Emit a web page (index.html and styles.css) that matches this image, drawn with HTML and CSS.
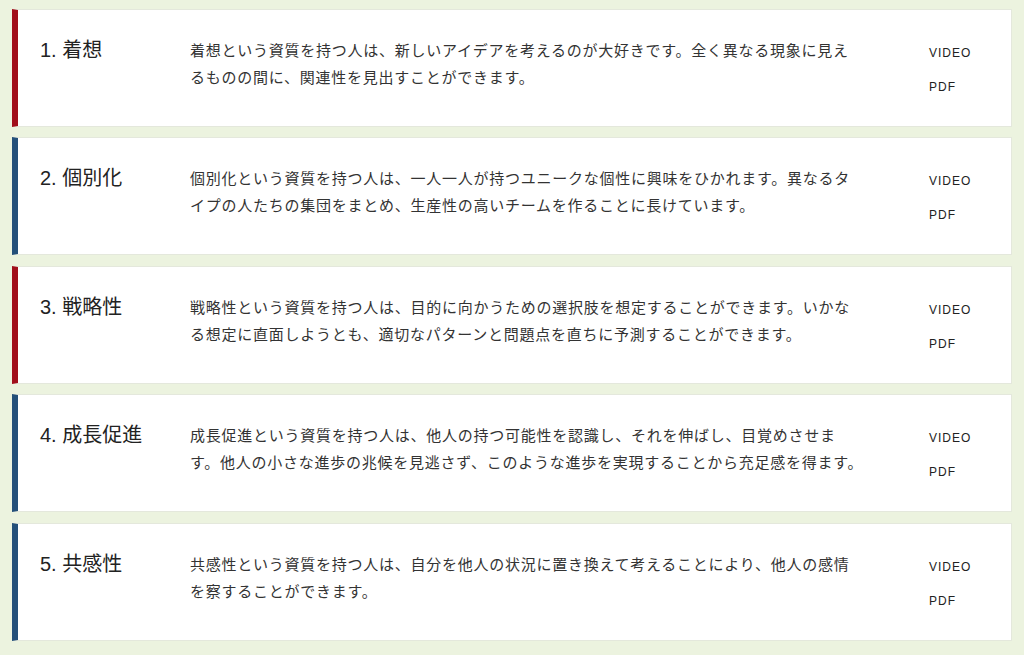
FILE: index.html
```html
<!DOCTYPE html>
<html lang="ja">
<head>
<meta charset="utf-8">
<title>資質</title>
<link rel="stylesheet" href="styles.css">
</head>
<body>
<div class="list">
  <div class="card card-red">
    <h2 class="title">1. 着想</h2>
    <p class="desc">着想という資質を持つ人は、新しいアイデアを考えるのが大好きです。全く異なる現象に見えるものの間に、関連性を見出すことができます。</p>
    <div class="links"><a class="link">VIDEO</a><a class="link">PDF</a></div>
  </div>
  <div class="card card-blue">
    <h2 class="title">2. 個別化</h2>
    <p class="desc">個別化という資質を持つ人は、一人一人が持つユニークな個性に興味をひかれます。異なるタイプの人たちの集団をまとめ、生産性の高いチームを作ることに長けています。</p>
    <div class="links"><a class="link">VIDEO</a><a class="link">PDF</a></div>
  </div>
  <div class="card card-red">
    <h2 class="title">3. 戦略性</h2>
    <p class="desc">戦略性という資質を持つ人は、目的に向かうための選択肢を想定することができます。いかなる想定に直面しようとも、適切なパターンと問題点を直ちに予測することができます。</p>
    <div class="links"><a class="link">VIDEO</a><a class="link">PDF</a></div>
  </div>
  <div class="card card-blue">
    <h2 class="title">4. 成長促進</h2>
    <p class="desc">成長促進という資質を持つ人は、他人の持つ可能性を認識し、それを伸ばし、目覚めさせま<br><span class="nowrap">す。他人の小さな進歩の兆候を見逃さず、このような進歩を実現することから充足感を得ます。</span></p>
    <div class="links"><a class="link">VIDEO</a><a class="link">PDF</a></div>
  </div>
  <div class="card card-blue">
    <h2 class="title">5. 共感性</h2>
    <p class="desc">共感性という資質を持つ人は、自分を他人の状況に置き換えて考えることにより、他人の感情を察することができます。</p>
    <div class="links"><a class="link">VIDEO</a><a class="link">PDF</a></div>
  </div>
</div>
</body>
</html>
```

FILE: styles.css
```css
html, body {
  margin: 0;
  padding: 0;
  background: #ecf3df;
}
body {
  font-family: "Noto Sans CJK JP", "Noto Sans", sans-serif;
  color: #333;
}
.list {
  padding: 8.5px 12px 0 12px;
  display: flex;
  flex-direction: column;
  gap: 10.5px;
}
.card {
  box-sizing: border-box;
  height: 118px;
  background: #fff;
  border: 1px solid #e4e8dc;
  border-left: 6px solid #24507a;
  padding: 26px 0 0 22px;
  display: grid;
  grid-template-columns: 150px 670px auto;
  align-items: start;
}
.card-red { border-left-color: #a10f1b; }
.card-blue { border-left-color: #24507a; }
.title {
  margin: 0;
  font-family: "Liberation Sans", "Noto Sans CJK JP", sans-serif;
  font-size: 20px;
  font-weight: 400;
  line-height: 28px;
  color: #222;
}
.desc {
  margin: 0;
  font-size: 15px;
  line-height: 27px;
  letter-spacing: 0.75px;
  color: #333;
}
.nowrap {
  white-space: nowrap;
}
.links {
  margin-left: 69px;
  display: flex;
  flex-direction: column;
}
.link {
  font-family: "Liberation Sans", "Noto Sans", sans-serif;
  font-size: 12px;
  line-height: 34px;
  letter-spacing: 1px;
  color: #222;
}
```
